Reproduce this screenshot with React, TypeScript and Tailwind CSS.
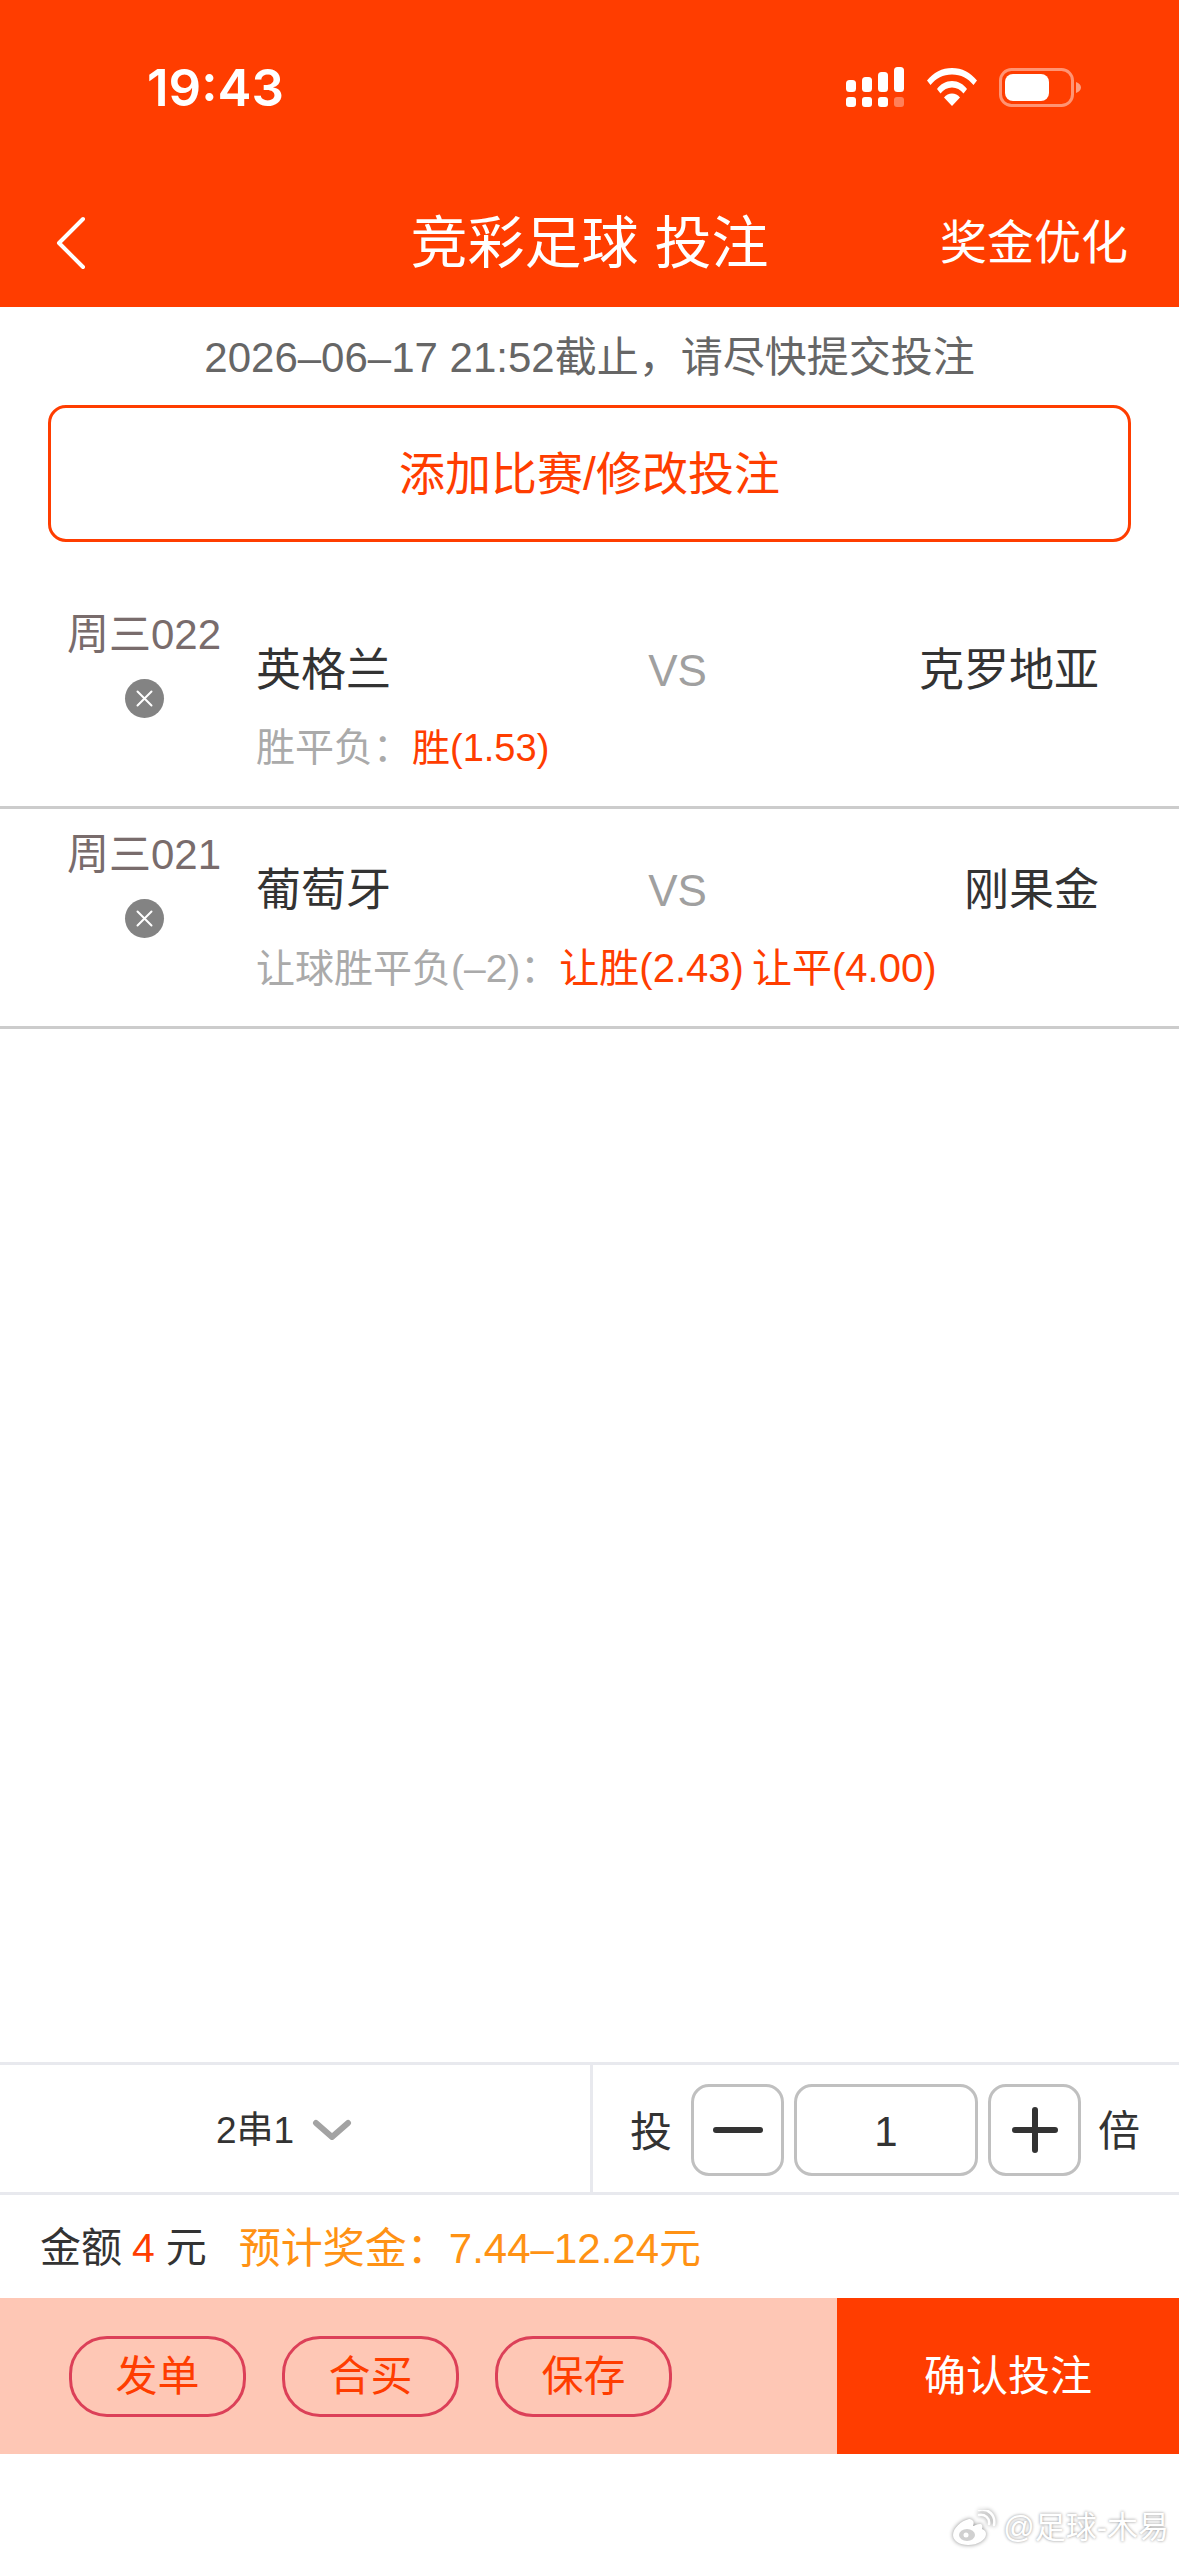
import React from "react";

const font = { fontFamily: '"Liberation Sans", "Noto Sans CJK SC", sans-serif' };
const clock = { fontFamily: 'Inter, "Liberation Sans", sans-serif' };

function StatusIcons() {
  return (
    <div className="flex items-center">
      <svg width="58" height="40" viewBox="0 0 58 40" fill="white">
        <rect x="0" y="13" width="10" height="12" rx="3.5" />
        <rect x="16" y="10" width="10" height="15" rx="3.5" />
        <rect x="32" y="5" width="10" height="20" rx="3.5" />
        <rect x="48" y="0" width="10" height="25" rx="3.5" />
        <rect x="0" y="30" width="10" height="10" rx="3" />
        <rect x="16" y="30" width="10" height="10" rx="3" />
        <rect x="32" y="30" width="10" height="10" rx="3" />
        <rect x="48" y="30" width="10" height="10" rx="3" opacity="0.35" />
      </svg>
      <svg className="ml-[23px]" width="50" height="38" viewBox="0 0 50 38" fill="white">
        <path d="M0 12.5C6.5 4.5 15 0 25 0s18.500 4.500 25 12.500l-3.500 4.500C41 10.500 34 6.500 25 6.500S9 10.500 3.500 17z" />
        <path d="M10 21C13.500 16 19 13 25 13s11.500 3 15 8l-3.500 4.500C33.500 21.500 29.500 19.500 25 19.500s-8.500 2-11.500 6z" />
        <path d="M17 29.500C19 27 22 25.500 25 25.500s6 1.500 8 4L25 38z" />
      </svg>
      <svg className="ml-[22px]" width="82" height="39" viewBox="0 0 82 39" fill="none">
        <rect x="1.500" y="1.500" width="72" height="36" rx="11" stroke="white" strokeOpacity="0.45" strokeWidth="3" />
        <rect x="6" y="6" width="44" height="27" rx="8" fill="white" />
        <path d="M77 14c3 1 5 3 5 5.500S80 24 77 25z" fill="white" fillOpacity="0.5" />
      </svg>
    </div>
  );
}

function CloseDot() {
  return (
    <div className="w-[39px] h-[39px] rounded-full bg-[#838383] flex items-center justify-center">
      <svg width="19" height="19" viewBox="0 0 19 19" stroke="white" strokeWidth="2" strokeLinecap="round">
        <path d="M2.500 2.500l14 14M16.500 2.500l-14 14" />
      </svg>
    </div>
  );
}

function Match(props: { code: string; home: string; away: string; label: string; picks: string; picksClass: string }) {
  return (
    <div className="flex h-[220px] border-b-[3px] border-[#cccccc]">
      <div className="w-[288px] shrink-0 flex flex-col items-center pt-[20px] gap-[18px]">
        <div className="text-[42px] leading-[52px] text-[#796c6c] whitespace-nowrap">{props.code}</div>
        <CloseDot />
      </div>
      <div className="flex-1 pr-[80px] -ml-[32px] pt-[51px]">
        <div className="grid grid-cols-[1fr_auto_1fr] items-center h-[62px]">
          <div className="text-[45px] leading-[62px] text-[#333333]">{props.home}</div>
          <div className="text-[44px] leading-[62px] text-[#a0a0a0]">VS</div>
          <div className="text-[45px] leading-[62px] text-[#333333] text-right">{props.away}</div>
        </div>
        <div className="mt-[20px] text-[39px] leading-[52px] whitespace-nowrap">
          <span className="text-[#aaaaaa]">{props.label}</span>
          <span className={props.picksClass}>{props.picks}</span>
        </div>
      </div>
    </div>
  );
}

function Pill({ children }: { children: React.ReactNode }) {
  return (
    <div className="w-[177px] h-[81px] rounded-[38px] border-[3px] border-[#dc4058] flex items-center justify-center text-[42px] text-[#ff3d00]">
      {children}
    </div>
  );
}

export default function App() {
  return (
    <div className="w-[1179px] h-[2556px] bg-white flex flex-col relative overflow-hidden" style={font}>
      <header className="bg-[#ff3d00] h-[307px] shrink-0 text-white">
        <div className="h-[190px] flex items-start justify-between pl-[147px] pr-[98px] pt-[61px]">
          <div className="text-[51px] leading-[54px] font-semibold" style={clock}>19:43</div>
          <div className="pt-[6px]"><StatusIcons /></div>
        </div>
        <div className="grid grid-cols-[1fr_auto_1fr] items-center h-[106px] pl-[51px] pr-[51px]">
          <svg className="ml-[4px]" width="32" height="54" viewBox="0 0 32 54" fill="none" stroke="white" strokeWidth="4" strokeLinecap="round" strokeLinejoin="round">
            <path d="M28 3L4 27l24 24" />
          </svg>
          <div className="text-[57px] leading-[70px] whitespace-nowrap">竞彩足球 投注</div>
          <div className="text-[47px] leading-[60px] text-right whitespace-nowrap">奖金优化</div>
        </div>
      </header>

      <div className="h-[98px] shrink-0 flex items-center justify-center text-[42px] text-[#666666] whitespace-nowrap pt-[2px]">
        2026–06–17 21:52截止，请尽快提交投注
      </div>
      <div className="mx-[48px] h-[137px] shrink-0 rounded-[18px] border-[3px] border-[#ff3d00] flex items-center justify-center pt-[2px] text-[46px] text-[#ff3d00]">
        添加比赛/修改投注
      </div>

      <div className="mt-[47px]">
        <Match code="周三022" home="英格兰" away="克罗地亚" label="胜平负：" picks="胜(1.53)" picksClass="text-[#ff3d00] text-[38px]" />
        <Match code="周三021" home="葡萄牙" away="刚果金" label="让球胜平负(–2)：" picks="让胜(2.43) 让平(4.00)" picksClass="text-[#ff3d00] text-[40px] [word-spacing:-3px]" />
      </div>

      <div className="flex-1" />

      <div className="flex h-[133px] border-y-[3px] border-[#e8e9ee] shrink-0">
        <div className="w-[593px] border-r-[3px] border-[#e8e9ee] flex items-center justify-center gap-[18px] pr-[22px] pt-[2px] text-[37px] text-[#333333]">
          <span className="pt-[2px]">2串1</span>
          <svg width="40" height="22" viewBox="0 0 40 22" fill="none" stroke="#a3a3a3" strokeWidth="6" strokeLinecap="round" strokeLinejoin="round">
            <path d="M4 4l16 14L36 4" />
          </svg>
        </div>
        <div className="flex-1 flex items-center pl-[37px] pt-[2px] text-[42px] text-[#333333]">
          <span className="pt-[5px]">投</span>
          <div className="ml-[19px] w-[93px] h-[92px] rounded-[18px] border-[3px] border-[#c0c0c0] flex items-center justify-center">
            <div className="w-[50px] h-[6px] rounded-full bg-[#333333]" />
          </div>
          <div className="ml-[10px] w-[184px] h-[92px] rounded-[18px] border-[3px] border-[#c0c0c0] flex items-center justify-center pt-[4px]">1</div>
          <div className="ml-[10px] w-[93px] h-[92px] rounded-[18px] border-[3px] border-[#c0c0c0] flex items-center justify-center">
            <svg width="46" height="46" viewBox="0 0 46 46" stroke="#333333" strokeWidth="6" strokeLinecap="round">
              <path d="M3 23h40M23 3v40" />
            </svg>
          </div>
          <span className="ml-[17px] pt-[3px]">倍</span>
        </div>
      </div>

      <div className="h-[103px] shrink-0 flex items-center pl-[40px] pt-[4px] text-[41px] text-[#333333] whitespace-nowrap">
        <span>金额</span>
        <span className="text-[#ff3d00] ml-[10px]">4</span>
        <span className="ml-[11px]">元</span>
        <span className="text-[#ff9214] text-[42px] ml-[32px]">预计奖金：7.44–12.24元</span>
      </div>

      <div className="flex h-[156px] shrink-0 mb-[102px]">
        <div className="flex-1 bg-[#fec7b5] flex items-center pl-[69px] gap-[36px]">
          <Pill>发单</Pill>
          <Pill>合买</Pill>
          <Pill>保存</Pill>
        </div>
        <div className="w-[342px] bg-[#ff3d00] flex items-center justify-center text-[42px] text-white">确认投注</div>
      </div>

      <div className="absolute right-[10px] bottom-[8px] flex items-center gap-[7px] text-[31px] leading-[40px] text-white [text-shadow:0_0_3px_#8a8a8a]">
        <svg className="drop-shadow-[0_0_2px_#8a8a8a]" width="44" height="36" viewBox="0 0 44 36" fill="white">
          <path d="M17 9C9 11 1 18 1 25c0 6 7 10 15 10 10 0 18-5 18-11 0-3-2-4-4-5 1-3 0-5-2-5-3 0-6 2-7 2 1-3 1-5-1-6-1-1-2-1-3-1z" />
          <ellipse cx="15" cy="25" rx="8" ry="6" fill="#d0d0d0" />
          <circle cx="14" cy="25" r="2.500" fill="white" />
          <path d="M27 5c6-1 11 3 10 9M27 0c9-2 17 5 15 15" fill="none" stroke="white" strokeWidth="2.500" strokeLinecap="round" />
        </svg>
        <span className="whitespace-nowrap">@足球-木易</span>
      </div>
    </div>
  );
}
